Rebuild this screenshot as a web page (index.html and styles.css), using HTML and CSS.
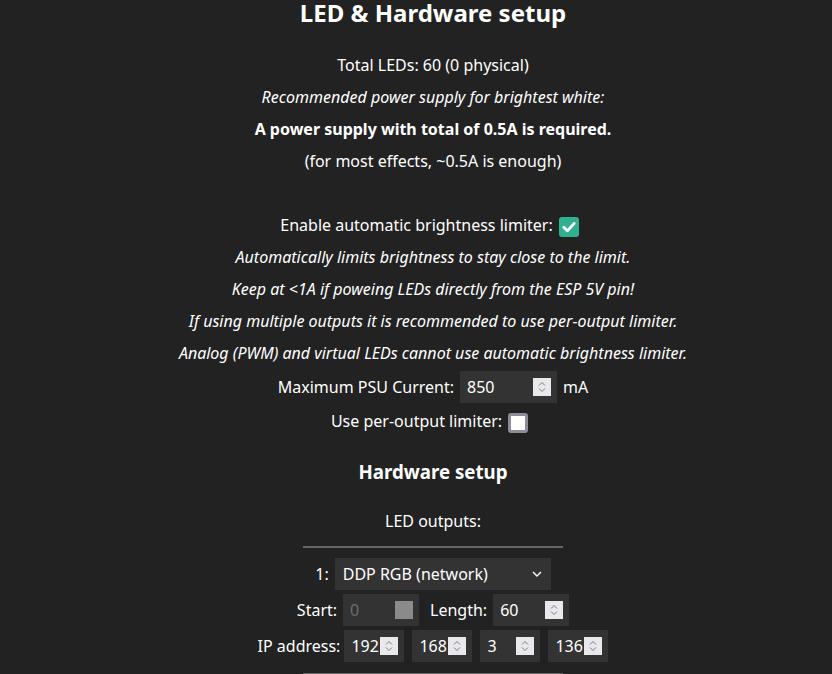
FILE: index.html
```
<html>
<head>
  <meta name="viewport" content="width=device-width, initial-scale=1.0">
  <link rel="stylesheet" href="styles.css">
</head>
<body>
  <h2>LED &amp; Hardware setup</h2>
  <div class="line">Total LEDs: 60 (0 physical)</div>
  <div class="line"><i>Recommended power supply for brightest white:</i></div>
  <div class="line"><b>A power supply with total of 0.5A is required.</b></div>
  <div class="line">(for most effects, ~0.5A is enough)</div>
  <div class="line"></div>

  <div class="row chk">
    <span>Enable automatic brightness limiter:</span>
    <span class="cb on">
      <svg width="20" height="20" viewBox="0 0 20 20"><path d="M4.8 10.2l3.6 3.6 6.8-7.4" fill="none" stroke="#fff" stroke-width="2.8" stroke-linecap="round" stroke-linejoin="round"/></svg>
    </span>
  </div>
  <div class="abl">
    <div class="line"><i>Automatically limits brightness to stay close to the limit.</i></div>
    <div class="line"><i>Keep at &lt;1A if poweing LEDs directly from the ESP 5V pin!</i></div>
    <div class="line"><i>If using multiple outputs it is recommended to use per-output limiter.</i></div>
    <div class="line"><i>Analog (PWM) and virtual LEDs cannot use automatic brightness limiter.</i></div>
    <div class="row">
      <span>Maximum PSU Current:</span>
      <span class="numbox xl">
        <input type="text" class="num" value="850">
        <span class="spin"><svg width="18" height="18" viewBox="0 0 18 18"><path d="M6 7.5l3-3 3 3M6 10.5l3 3 3-3" fill="none" stroke="#7a7a7a" stroke-width="1"/></svg></span>
      </span>
      <span>mA</span>
    </div>
    <div class="row chk">
      <span>Use per-output limiter:</span>
      <span class="cb off"></span>
    </div>
  </div>

  <h3>Hardware setup</h3>
  <div class="line">LED outputs:</div>
  <hr class="sml">

  <div class="row">
    <span>1:</span>
    <span class="sel">
      <select class="type">
        <option>DDP RGB (network)</option>
      </select>
      <svg class="arrow" width="10" height="6" viewBox="0 0 10 6"><path d="M1 1l4 4 4-4" fill="none" stroke="#fff" stroke-width="1.4"/></svg>
    </span>
  </div>
  <div class="row">
    <span>Start:</span>
    <span class="numbox l">
      <input type="text" class="num" value="0" disabled>
      <span class="spin dis"></span>
    </span>
    <span class="lenlbl">Length:</span>
    <span class="numbox l">
      <input type="text" class="num" value="60">
      <span class="spin"><svg width="18" height="18" viewBox="0 0 18 18"><path d="M6 7.5l3-3 3 3M6 10.5l3 3 3-3" fill="none" stroke="#7a7a7a" stroke-width="1"/></svg></span>
    </span>
  </div>
  <div class="row ip">
    <span class="iplbl">IP address:</span>
    <span class="numbox s">
      <input type="text" class="num" value="192">
      <span class="spin"><svg width="18" height="18" viewBox="0 0 18 18"><path d="M6 7.5l3-3 3 3M6 10.5l3 3 3-3" fill="none" stroke="#7a7a7a" stroke-width="1"/></svg></span>
    </span>
    <span class="numbox s">
      <input type="text" class="num" value="168">
      <span class="spin"><svg width="18" height="18" viewBox="0 0 18 18"><path d="M6 7.5l3-3 3 3M6 10.5l3 3 3-3" fill="none" stroke="#7a7a7a" stroke-width="1"/></svg></span>
    </span>
    <span class="numbox s">
      <input type="text" class="num" value="3">
      <span class="spin"><svg width="18" height="18" viewBox="0 0 18 18"><path d="M6 7.5l3-3 3 3M6 10.5l3 3 3-3" fill="none" stroke="#7a7a7a" stroke-width="1"/></svg></span>
    </span>
    <span class="numbox s">
      <input type="text" class="num" value="136">
      <span class="spin"><svg width="18" height="18" viewBox="0 0 18 18"><path d="M6 7.5l3-3 3 3M6 10.5l3 3 3-3" fill="none" stroke="#7a7a7a" stroke-width="1"/></svg></span>
    </span>
  </div>
  <hr class="sml">
</body>
</html>
```

FILE: styles.css
```
  html { background-color: #222222; }
  body {
    margin: 0;
    padding-left: 34px;
    background-color: #222222;
    color: #fff;
    font-family: "Noto Sans", sans-serif;
    font-size: 16px;
    line-height: 32px;
    text-align: center;
  }

  h2 {
    font-size: 24px;
    line-height: 26px;
    margin: 0 0 23px 0;
  }

  h3 {
    font-size: 18.72px;
    line-height: 32px;
    margin: 19px 0 17px 0;
  }

  .line { height: 32px; }

  .row {
    height: 36px;
    display: flex;
    align-items: center;
    justify-content: center;
    gap: 6px;
  }
  .chk { height: 32px; }

  /* number field: text + spinner in a dark box */
  .numbox {
    display: inline-flex;
    align-items: center;
    height: 32px;
    box-sizing: border-box;
    padding: 0 6px 0 7px;
    background: #333;
  }
  .xl { width: 97px; }
  .l { width: 76px; }
  .s { width: 60px; }

  .num {
    flex: 1;
    min-width: 0;
    width: 10px;
    height: 32px;
    padding: 0;
    background: transparent;
    color: #fff;
    border: 0;
    font-family: "Noto Sans", sans-serif;
    font-size: 16px;
    outline: none;
  }
  .num:disabled { color: #6e6e6e; }

  .spin {
    width: 18px;
    height: 18px;
    background: #e9e9ed;
    display: block;
  }
  .spin svg { display: block; }
  .spin.dis { background: #8a8a8a; }

  .lenlbl { margin-left: 5px; }
  .ip { gap: 8px; }
  .iplbl { margin-right: -4px; }

  .cb {
    width: 20px;
    height: 20px;
    box-sizing: border-box;
    border-radius: 3px;
    margin: 3px 7px 0 0;
    display: block;
  }
  .cb svg { display: block; }
  .cb.on { background: #2fb191; }
  .cb.off { background: #fff; border: 3px solid #8e8c9b; }

  .sel { position: relative; display: inline-block; height: 32px; }
  .type {
    appearance: none;
    width: 216px;
    height: 32px;
    background: #333;
    color: #fff;
    border: 0;
    padding: 0 8px;
    font-family: "Noto Sans", sans-serif;
    font-size: 16px;
    text-align: left;
    outline: none;
  }
  .arrow { position: absolute; right: 9px; top: 13px; }

  hr.sml {
    width: 260px;
    margin: 9px auto 8px auto;
    border: 0;
    border-top: 2px solid #666;
  }
```
